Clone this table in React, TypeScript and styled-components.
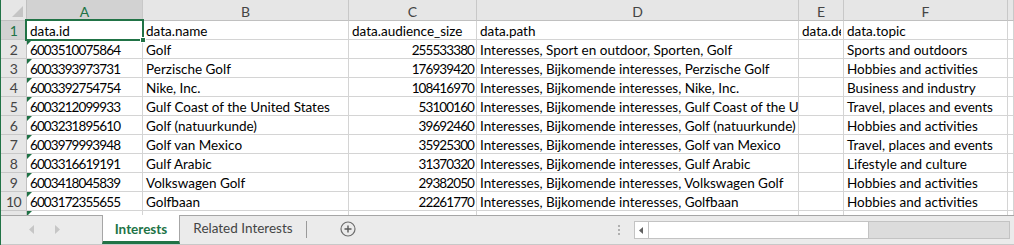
import React from "react";
import styled, { createGlobalStyle, css } from "styled-components";

const GREEN = "#217346";
const GRID = "#d4d4d4";
const FONT = `Lato, "Noto Sans", "Liberation Sans", sans-serif`;

const Global = createGlobalStyle`
  html, body { margin: 0; padding: 0; background: #fff; }
  body { font-family: ${FONT}; }
  * { box-sizing: border-box; }
`;

const Window = styled.div`
  width: 1014px;
  height: 245px;
  border-left: 1px solid ${GREEN};
  display: flex;
  flex-direction: column;
  overflow: hidden;
  background: #fff;
`;

const Sheet = styled.div`
  height: 215px;
  overflow: hidden;
  display: grid;
  grid-template-columns: 26px 116px 206px 128px 322px 45px 164px 1fr;
  grid-auto-rows: 19px;
  grid-template-rows: 21px;
  font-size: 13.5px;
  color: #000;
`;

const ColHead = styled.div<{ $sel?: boolean }>`
  background: ${(p) => (p.$sel ? "#d2d2d2" : "#e6e6e6")};
  border-right: 1px solid #c8c8c8;
  border-bottom: 1px solid ${(p) => (p.$sel ? GREEN : "#c0c0c0")};
  ${(p) => p.$sel && css`box-shadow: inset 0 -1px 0 ${GREEN};`}
  color: ${(p) => (p.$sel ? GREEN : "#444")};
  font-size: 14px;
  display: flex;
  align-items: center;
  justify-content: center;
  padding-top: 2px;
`;

const Corner = styled.div`
  background: #e6e6e6;
  border-right: 1px solid #c0c0c0;
  border-bottom: 1px solid #c0c0c0;
  position: relative;
  &::after {
    content: "";
    position: absolute;
    right: 3px;
    bottom: 3px;
    width: 0;
    height: 0;
    border-left: 11px solid transparent;
    border-bottom: 11px solid #c4c4c4;
  }
`;

const RowHead = styled.div<{ $sel?: boolean }>`
  background: ${(p) => (p.$sel ? "#d2d2d2" : "#e6e6e6")};
  border-right: 1px solid ${(p) => (p.$sel ? GREEN : "#c0c0c0")};
  ${(p) => p.$sel && css`box-shadow: inset -1px 0 0 ${GREEN};`}
  border-bottom: 1px solid #c8c8c8;
  color: ${(p) => (p.$sel ? GREEN : "#444")};
  font-size: 14px;
  letter-spacing: -0.6px;
  display: flex;
  align-items: flex-end;
  justify-content: center;
  line-height: 17px;
`;

const Cell = styled.div<{ $right?: boolean; $flag?: boolean; $active?: boolean; $num?: boolean }>`
  position: relative;
  border-right: 1px solid ${GRID};
  border-bottom: 1px solid ${GRID};
  padding: 1px 2px 0 3px;
  white-space: nowrap;
  overflow: hidden;
  line-height: 18px;
  letter-spacing: ${(p) => (p.$num ? "-0.9px" : "0")};
  text-align: ${(p) => (p.$right ? "right" : "left")};
  ${(p) =>
    p.$flag &&
    css`
      &::before {
        content: "";
        position: absolute;
        left: 0;
        top: 0;
        border-top: 5px solid #1e7145;
        border-right: 5px solid transparent;
      }
    `}
  ${(p) =>
    p.$active &&
    css`
      overflow: visible;
      &::after {
        content: "";
        position: absolute;
        left: -2px;
        top: -2px;
        right: -2px;
        bottom: -2px;
        border: 2px solid ${GREEN};
        pointer-events: none;
        z-index: 2;
      }
    `}
`;

const Clip = styled.span`
  display: block;
  overflow: hidden;
`;

const FillHandle = styled.span`
  position: absolute;
  right: -4px;
  bottom: -4px;
  width: 6px;
  height: 6px;
  background: ${GREEN};
  border: 1px solid #fff;
  z-index: 3;
`;

const TabBar = styled.div`
  height: 30px;
  background: #ebebeb;
  border-top: 1px solid #a6a6a6;
  border-bottom: 1px solid #c8c8c8;
  display: flex;
  align-items: stretch;
  font-size: 13.5px;
`;

const Nav = styled.div`
  width: 101px;
  display: flex;
  align-items: center;
  gap: 19px;
  padding-left: 28px;
  padding-bottom: 2px;
`;

const Tab = styled.div<{ $active?: boolean }>`
  margin-top: -1px;
  display: flex;
  align-items: center;
  justify-content: center;
  ${(p) =>
    p.$active
      ? css`
          width: 78px;
          background: #fff;
          border-left: 1px solid #a6a6a6;
          border-right: 1px solid #a6a6a6;
          border-bottom: 3px solid ${GREEN};
          color: ${GREEN};
          font-weight: 700;
          padding-top: 2px;
        `
      : css`
          width: 126px;
          color: #444;
          padding-bottom: 3px;
        `}
`;

const Sep = styled.div`
  width: 1px;
  background: #9a9a9a;
  margin: 5px 0 6px;
`;

const AddBtn = styled.div`
  width: 82px;
  display: flex;
  align-items: center;
  justify-content: center;
  padding-bottom: 2px;
`;

const Spacer = styled.div`
  width: 245px;
  display: flex;
  align-items: center;
  justify-content: flex-end;
  padding-right: 14px;
`;

const Dots = styled.div`
  display: flex;
  flex-direction: column;
  gap: 2px;
  span {
    width: 2px;
    height: 2px;
    background: #b0b0b0;
  }
`;

const HScroll = styled.div`
  flex: 1;
  margin: 5px 4px 5px 0;
  display: flex;
  border: 1px solid #c3c3c3;
  background: #dcdcdc;
`;

const ArrowBtn = styled.div`
  width: 14px;
  background: #fff;
  border-right: 1px solid #c3c3c3;
  display: flex;
  align-items: center;
  justify-content: center;
`;

const Thumb = styled.div`
  width: 220px;
  background: #fff;
  border-right: 1px solid #c3c3c3;
`;

const cols = ["A", "B", "C", "D", "E", "F", ""];

const rows: [string, string, string, string, string, string][] = [
  ["6003510075864", "Golf", "255533380", "Interesses, Sport en outdoor, Sporten, Golf", "", "Sports and outdoors"],
  ["6003393973731", "Perzische Golf", "176939420", "Interesses, Bijkomende interesses, Perzische Golf", "", "Hobbies and activities"],
  ["6003392754754", "Nike, Inc.", "108416970", "Interesses, Bijkomende interesses, Nike, Inc.", "", "Business and industry"],
  ["6003212099933", "Gulf Coast of the United States", "53100160", "Interesses, Bijkomende interesses, Gulf Coast of the United States", "", "Travel, places and events"],
  ["6003231895610", "Golf (natuurkunde)", "39692460", "Interesses, Bijkomende interesses, Golf (natuurkunde)", "", "Hobbies and activities"],
  ["6003979993948", "Golf van Mexico", "35925300", "Interesses, Bijkomende interesses, Golf van Mexico", "", "Travel, places and events"],
  ["6003316619191", "Gulf Arabic", "31370320", "Interesses, Bijkomende interesses, Gulf Arabic", "", "Lifestyle and culture"],
  ["6003418045839", "Volkswagen Golf", "29382050", "Interesses, Bijkomende interesses, Volkswagen Golf", "", "Hobbies and activities"],
  ["6003172355655", "Golfbaan", "22261770", "Interesses, Bijkomende interesses, Golfbaan", "", "Hobbies and activities"],
];

const header = ["data.id", "data.name", "data.audience_size", "data.path", "data.description", "data.topic", "data.type"];

export default function App() {
  return (
    <>
      <Global />
      <Window>
        <Sheet>
          <Corner />
          {cols.map((c, i) => (
            <ColHead key={i} $sel={c === "A"}>
              {c}
            </ColHead>
          ))}
          <RowHead $sel>1</RowHead>
          {header.map((h, i) => (
            <Cell key={i} $active={i === 0}>
              <Clip>{h}</Clip>
              {i === 0 && <FillHandle />}
            </Cell>
          ))}
          {rows.map((r, ri) => (
            <React.Fragment key={ri}>
              <RowHead>{ri + 2}</RowHead>
              {r.map((v, ci) => (
                <Cell key={ci} $flag={ci === 0} $right={ci === 2} $num={ci === 0 || ci === 2}>
                  {v}
                </Cell>
              ))}
              <Cell />
            </React.Fragment>
          ))}
          <RowHead>11</RowHead>
          <Cell $flag />
          <Cell />
          <Cell />
          <Cell />
          <Cell />
          <Cell />
          <Cell />
        </Sheet>
        <TabBar>
          <Nav>
            <svg width="6" height="9" viewBox="0 0 6 9">
              <path d="M5 0 L0 4.5 L5 9 Z" fill="#c6c6c6" />
            </svg>
            <svg width="6" height="9" viewBox="0 0 6 9">
              <path d="M1 0 L6 4.5 L1 9 Z" fill="#c6c6c6" />
            </svg>
          </Nav>
          <Tab $active>Interests</Tab>
          <Tab>Related Interests</Tab>
          <Sep />
          <AddBtn>
            <svg width="16" height="16" viewBox="0 0 16 16">
              <circle cx="8" cy="8" r="7" fill="none" stroke="#6e6e6e" strokeWidth="1.2" />
              <path d="M8 4.5 V11.5 M4.5 8 H11.5" stroke="#5a5a5a" strokeWidth="1.4" />
            </svg>
          </AddBtn>
          <Spacer>
            <Dots>
              <span />
              <span />
              <span />
            </Dots>
          </Spacer>
          <HScroll>
            <ArrowBtn>
              <svg width="5" height="7" viewBox="0 0 5 7">
                <path d="M4 0 L0 3.5 L4 7 Z" fill="#606060" />
              </svg>
            </ArrowBtn>
            <Thumb />
          </HScroll>
        </TabBar>
      </Window>
    </>
  );
}
